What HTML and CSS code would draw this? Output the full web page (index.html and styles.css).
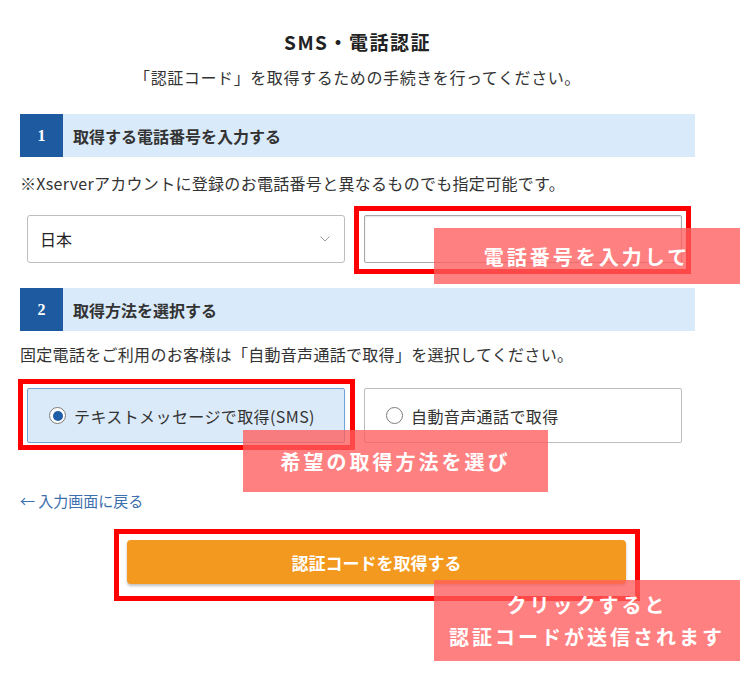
FILE: index.html
```html
<!DOCTYPE html>
<html lang="ja">
<head>
<meta charset="utf-8">
<title>SMS・電話認証</title>
<link rel="stylesheet" href="styles.css">
</head>
<body>
<div class="screen">
  <div class="form">
    <h1 class="title">SMS・電話認証</h1>
    <p class="lead">「認証コード」を取得するための手続きを行ってください。</p>

    <div class="step"><span class="step-num">1</span><span class="step-label">取得する電話番号を入力する</span></div>
    <p class="note">※Xserverアカウントに登録のお電話番号と異なるものでも指定可能です。</p>
    <div class="fields">
      <div class="select">
        <span>日本</span>
        <svg class="chev" width="10" height="6" viewBox="0 0 10 6"><polyline points="0.5,0.5 5,5 9.5,0.5" fill="none" stroke="#9a9a9a" stroke-width="1"/></svg>
      </div>
      <div class="input-wrap highlight hl-input">
        <div class="input"></div>
      </div>
    </div>

    <div class="step step2"><span class="step-num">2</span><span class="step-label">取得方法を選択する</span></div>
    <p class="note note2">固定電話をご利用のお客様は「自動音声通話で取得」を選択してください。</p>
    <div class="fields options">
      <div class="option checked highlight hl-option"><span class="radio"></span><span>テキストメッセージで取得(SMS)</span></div>
      <div class="option"><span class="radio"></span><span>自動音声通話で取得</span></div>
    </div>

    <a class="back" href="#">← 入力画面に戻る</a>

    <div class="btn-row">
      <div class="btn highlight hl-btn">認証コードを取得する</div>
    </div>
  </div>

  <div class="callout callout-1">電話番号を入力して</div>
  <div class="callout callout-2">希望の取得方法を選び</div>
  <div class="callout callout-3">クリックすると<br>認証コードが送信されます</div>
</div>
</body>
</html>
```
FILE: styles.css
```css
html, body {
  margin: 0;
  padding: 0;
  background: #ffffff;
}
body {
  font-family: "Noto Sans CJK JP", "Noto Sans", sans-serif;
  color: #333333;
}
.screen {
  position: relative;
  width: 750px;
  height: 674px;
  overflow: hidden;
}
.form {
  width: 675px;
  margin-left: 20px;
  padding-top: 28px;
}
.title {
  margin: 0;
  font-size: 19px;
  line-height: 28px;
  font-weight: 700;
  letter-spacing: 1.5px;
  text-align: center;
  color: #222;
}
.lead {
  margin: 10px 0 0;
  font-size: 16px;
  line-height: 22px;
  letter-spacing: 0.6px;
  text-align: center;
}
.step {
  margin-top: 26px;
  height: 43px;
  display: flex;
  align-items: center;
  background: #d9eafa;
}
.step2 {
  margin-top: 25px;
}
.step-num {
  width: 43px;
  height: 43px;
  display: flex;
  align-items: center;
  justify-content: center;
  background: #1d5aa0;
  color: #fff;
  font-family: "Liberation Serif", serif;
  font-weight: 700;
  font-size: 16px;
}
.step-label {
  margin-left: 10px;
  font-size: 16px;
  font-weight: 700;
  color: #333;
}
.note {
  margin: 14px 0 0;
  font-size: 16px;
  line-height: 24px;
  letter-spacing: 0.3px;
}
.note2 {
  margin-top: 11px;
}
.fields {
  margin: 20px 13px 0 7px;
  display: grid;
  grid-template-columns: 1fr 1fr;
  column-gap: 19px;
  height: 48px;
}
.select {
  border: 1px solid #bdbdbd;
  border-radius: 3px;
  display: flex;
  align-items: center;
  justify-content: space-between;
  padding: 0 14px 0 12px;
  font-size: 16px;
  color: #222;
  background: #fff;
}
.chev {
  display: block;
}
.input-wrap {
  position: relative;
}
.input {
  height: 100%;
  box-sizing: border-box;
  border: 1px solid #a8a8a8;
  border-radius: 2px;
  box-shadow: inset 0 1px 2px rgba(0,0,0,0.12);
  background: #fff;
}
.options {
  margin-top: 22px;
  height: 55px;
}
.option {
  position: relative;
  box-sizing: border-box;
  border: 1px solid #bcbcbc;
  border-radius: 2px;
  display: flex;
  align-items: center;
  padding-left: 21px;
  font-size: 16px;
  letter-spacing: 0.4px;
  color: #333;
  background: #fff;
}
.option.checked {
  background: #dbeaf9;
  border-color: #72a2d3;
}
.radio {
  width: 15px;
  height: 15px;
  border: 1px solid #7b7b7b;
  border-radius: 50%;
  background: #fff;
  margin-right: 8px;
  position: relative;
  flex: none;
}
.option.checked .radio::after {
  content: "";
  position: absolute;
  left: 2.5px;
  top: 2.5px;
  width: 10px;
  height: 10px;
  border-radius: 50%;
  background: #1f5fa8;
}
.back {
  display: block;
  margin-top: 47px;
  font-size: 15px;
  line-height: 22px;
  color: #3d6fae;
  text-decoration: none;
}
.btn-row {
  margin-top: 28px;
  margin-left: 107px;
  width: 499px;
}
.btn {
  position: relative;
  height: 44px;
  border-radius: 4px;
  background: #f4991f;
  color: #fff;
  font-size: 17px;
  font-weight: 700;
  display: flex;
  align-items: center;
  justify-content: center;
  box-shadow: 0 2px 3px rgba(0,0,0,0.25);
}

/* red highlight frames (annotation overlays) */
.highlight::after {
  content: "";
  position: absolute;
  border: 5px solid #ff0000;
  pointer-events: none;
}
.hl-input::after {
  top: -9px;
  left: -10px;
  right: -9px;
  bottom: -11px;
}
.hl-option::after {
  top: -10px;
  left: -10px;
  right: -11px;
  bottom: -8px;
}
.hl-btn::after {
  top: -11px;
  left: -13px;
  right: -14px;
  bottom: -17px;
}

/* pink annotation callouts */
.callout {
  position: absolute;
  background: rgba(255, 92, 92, 0.78);
  color: #fff;
  font-size: 20px;
  font-weight: 700;
  letter-spacing: 3px;
  display: flex;
  align-items: center;
  justify-content: center;
  text-align: center;
}
.callout-1 {
  left: 434px;
  top: 228px;
  width: 306px;
  height: 56px;
}
.callout-2 {
  left: 243px;
  top: 430px;
  width: 305px;
  height: 62px;
}
.callout-3 {
  left: 434px;
  top: 580px;
  width: 306px;
  height: 81px;
  line-height: 32px;
}
```
